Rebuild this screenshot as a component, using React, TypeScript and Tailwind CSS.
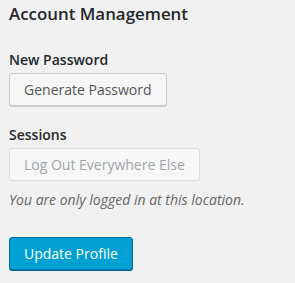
export default function App() {
  return (
    <div className="min-h-[283px] w-full bg-[#f1f1f1] pl-[9px] pt-[2px] font-['Open_Sans',sans-serif] text-[#23282d]">
      <h2 className="text-[16.9px] font-semibold leading-[24px]">Account Management</h2>

      <div className="mt-[24px] text-[14px] font-semibold leading-[19px]">New Password</div>
      <div className="mt-[4px]">
        <button className="rounded-[3px] border border-[#cccccc] bg-[#f7f7f7] px-[14px] py-[6px] text-[14px] leading-[19px] text-[#555555] shadow-[0_1px_0_#cccccc]">
          Generate Password
        </button>
      </div>

      <div className="mt-[19px] text-[14px] font-semibold leading-[19px]">Sessions</div>
      <div className="mt-[4px]">
        <button
          disabled
          className="rounded-[3px] border border-[#dddddd] bg-[#f7f7f7] px-[14px] py-[6px] text-[14px] leading-[19px] text-[#a0a5aa]"
        >
          Log Out Everywhere Else
        </button>
      </div>
      <p className="mt-[9px] text-[14px] italic leading-[19px] text-[#666666]">
        You are only logged in at this location.
      </p>

      <div className="mt-[28px]">
        <button className="rounded-[3px] border border-[#0073aa] bg-[#00a0d2] px-[14px] py-[6px] text-[14px] leading-[19px] text-white shadow-[0_1px_0_#006799]">
          Update Profile
        </button>
      </div>
    </div>
  );
}
